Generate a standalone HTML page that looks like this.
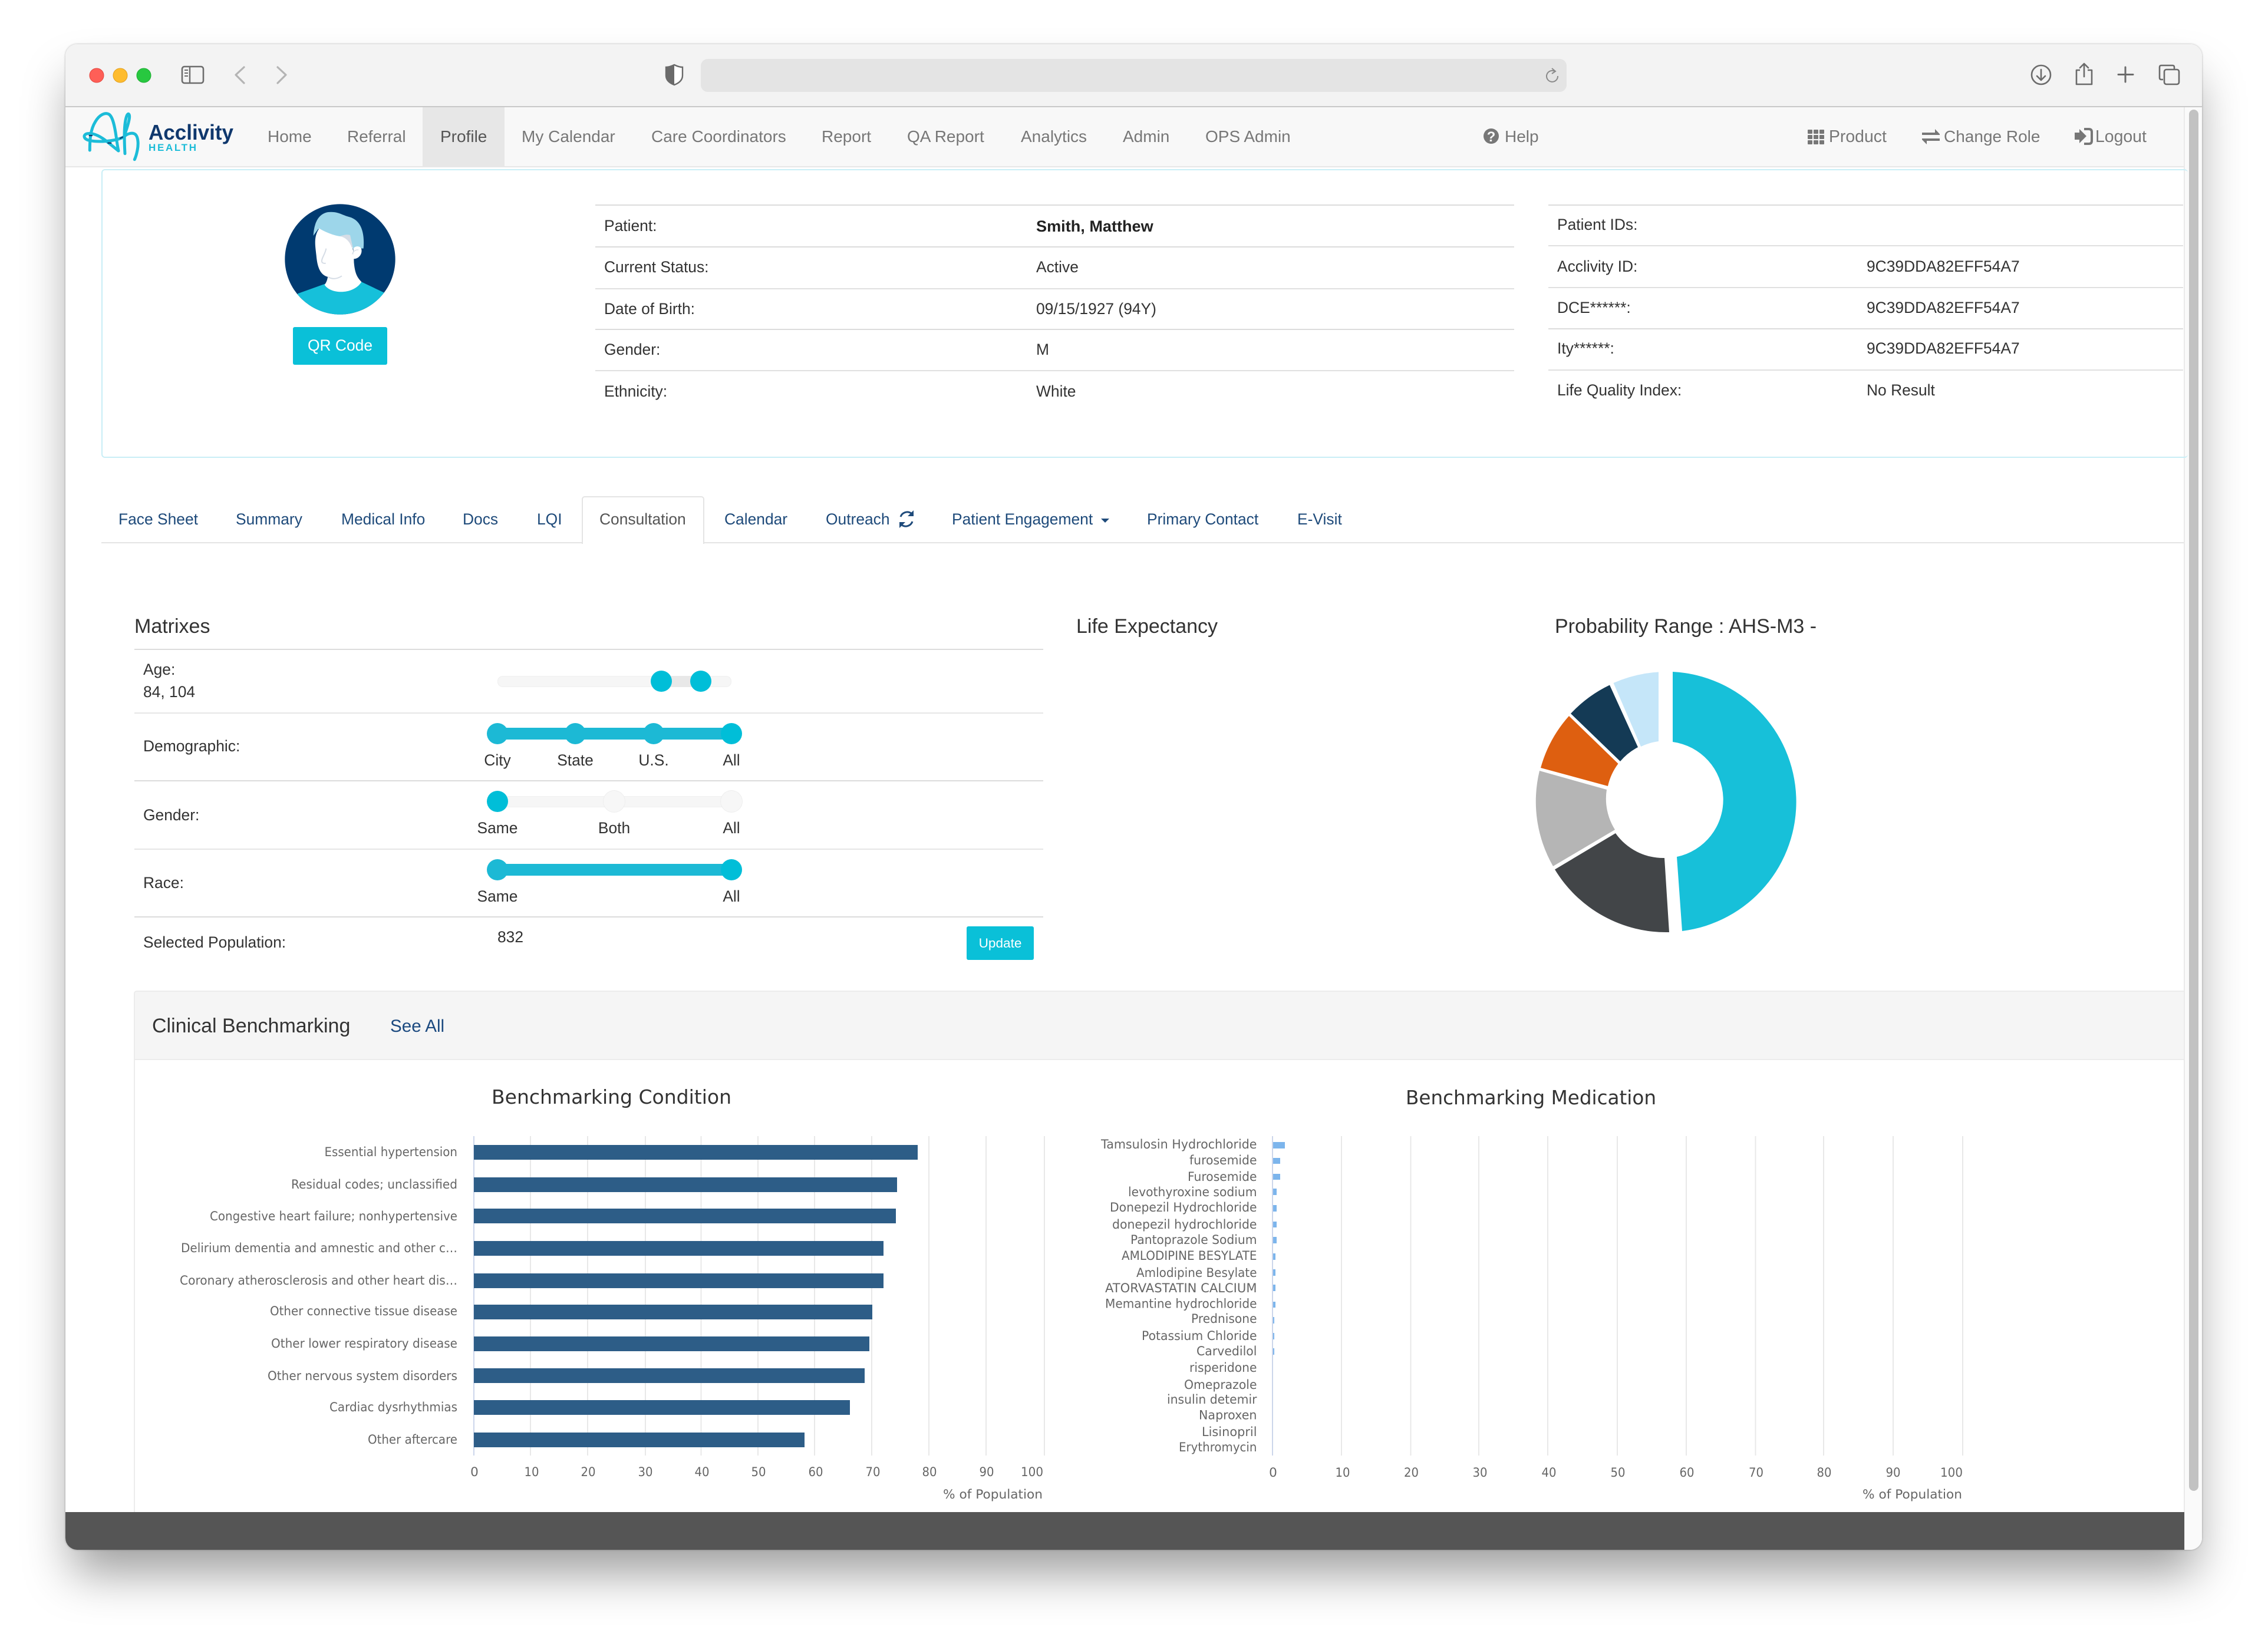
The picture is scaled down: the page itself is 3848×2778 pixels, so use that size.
<!DOCTYPE html>
<html lang="en">
<head>
<meta charset="utf-8">
<title>Acclivity Health - Profile</title>
<style>
html,body{margin:0;padding:0;width:3848px;height:2778px;background:#fff;overflow:hidden}
body{position:relative;font-family:"Liberation Sans",sans-serif;color:#333}
#shadow{position:absolute;left:111px;top:75px;width:3625px;height:2555px;border-radius:20px;box-shadow:0 50px 80px -10px rgba(0,0,0,.38),0 0 3px rgba(0,0,0,.3)}
#c{position:absolute;left:0;top:0;width:3848px;height:2778px;clip-path:inset(75px 112px 148px 111px round 20px);background:#fff}
.b{position:absolute}
.t{position:absolute;line-height:0;white-space:nowrap;font-size:26.4px;color:#333}
.n{font-size:28px;color:#777}
.tb{color:#1e4a7a}
.h{font-size:34px;color:#333}
.cl{transform:translateX(-50%)}
.ln{position:absolute;height:2px;background:#e0e0e0}
.track{position:absolute;height:19px;border-radius:9px;background:#f6f6f6;box-shadow:inset 0 0 0 1px #f0f0f0}
.fill{position:absolute;height:19px;background:#1cb9d5}
.hd{position:absolute;width:36px;height:36px;border-radius:50%;background:#00bed8;transform:translate(-50%,-50%)}
.hw{background:#f7f7f7;box-shadow:0 0 0 1px #eee}
svg{position:absolute;left:0;top:0}
</style>
</head>
<body>
<div id="shadow"></div>
<div id="c">
  <!-- title bar -->
  <div class="b" style="left:111px;top:75px;width:3625px;height:105px;background:#f3f3f3"></div>
  <div class="b" style="left:111px;top:180px;width:3625px;height:2px;background:#c8c8c8"></div>
  <div class="b" style="left:1189px;top:100px;width:1469px;height:56px;background:#e4e4e4;border-radius:12px"></div>
  <!-- nav -->
  <div class="b" style="left:111px;top:182px;width:3594px;height:100px;background:#f8f8f8"></div>
  <div class="b" style="left:111px;top:282px;width:3594px;height:2px;background:#e7e7e7"></div>
  <div class="b" style="left:717px;top:182px;width:139px;height:100px;background:#e7e7e7"></div>
  <div class="t n" style="left:454px;top:232px">Home</div>
  <div class="t n" style="left:589px;top:232px">Referral</div>
  <div class="t n" style="left:747px;top:232px;color:#555">Profile</div>
  <div class="t n" style="left:885px;top:232px">My Calendar</div>
  <div class="t n" style="left:1105px;top:232px">Care Coordinators</div>
  <div class="t n" style="left:1394px;top:232px">Report</div>
  <div class="t n" style="left:1539px;top:232px">QA Report</div>
  <div class="t n" style="left:1732px;top:232px">Analytics</div>
  <div class="t n" style="left:1905px;top:232px">Admin</div>
  <div class="t n" style="left:2045px;top:232px">OPS Admin</div>
  <div class="t n" style="left:2553px;top:232px">Help</div>
  <div class="t n" style="left:3103px;top:232px;font-size:28.4px">Product</div>
  <div class="t n" style="left:3298px;top:232px">Change Role</div>
  <div class="t n" style="left:3555px;top:232px;font-size:28.4px">Logout</div>

  <!-- scrollbar -->
  <div class="b" style="left:3705px;top:182px;width:31px;height:2450px;background:#fafafa;border-left:2px solid #eaeaea;box-sizing:border-box"></div>
  <div class="b" style="left:3714px;top:186px;width:16px;height:2344px;background:#c2c2c2;border-radius:8px"></div>

  <!-- patient panel -->
  <div class="b" style="left:172px;top:287px;width:3540px;height:490px;border:2px solid #c9eef6;border-radius:6px;box-sizing:border-box;border-right:0"></div>
  <div class="b" style="left:497px;top:555px;width:160px;height:64px;background:#0ac0d8;border-radius:3px"></div>
  <div class="t cl" style="left:577px;top:586px;color:#fff;font-size:26.4px">QR Code</div>

  <div class="ln" style="left:1010px;top:347px;width:1559px;background:#dcdcdc"></div>
  <div class="ln" style="left:1010px;top:418px;width:1559px;background:#dcdcdc"></div>
  <div class="ln" style="left:1010px;top:489px;width:1559px"></div>
  <div class="ln" style="left:1010px;top:558px;width:1559px;background:#dcdcdc"></div>
  <div class="ln" style="left:1010px;top:628px;width:1559px"></div>
  <div class="t" style="left:1025px;top:383px">Patient:</div>
  <div class="t" style="left:1758px;top:384px;font-weight:bold;color:#222;font-size:27.1px">Smith, Matthew</div>
  <div class="t" style="left:1025px;top:453px">Current Status:</div>
  <div class="t" style="left:1758px;top:453px">Active</div>
  <div class="t" style="left:1025px;top:524px">Date of Birth:</div>
  <div class="t" style="left:1758px;top:524px">09/15/1927 (94Y)</div>
  <div class="t" style="left:1025px;top:593px">Gender:</div>
  <div class="t" style="left:1758px;top:593px">M</div>
  <div class="t" style="left:1025px;top:664px">Ethnicity:</div>
  <div class="t" style="left:1758px;top:664px">White</div>

  <div class="ln" style="left:2627px;top:347px;width:1077px;background:#dcdcdc"></div>
  <div class="ln" style="left:2627px;top:416px;width:1077px"></div>
  <div class="ln" style="left:2627px;top:487px;width:1077px"></div>
  <div class="ln" style="left:2627px;top:557px;width:1077px;background:#dcdcdc"></div>
  <div class="ln" style="left:2627px;top:627px;width:1077px"></div>
  <div class="t" style="left:2642px;top:381px">Patient IDs:</div>
  <div class="t" style="left:2642px;top:452px">Acclivity ID:</div>
  <div class="t" style="left:3167px;top:452px">9C39DDA82EFF54A7</div>
  <div class="t" style="left:2642px;top:522px">DCE******:</div>
  <div class="t" style="left:3167px;top:522px">9C39DDA82EFF54A7</div>
  <div class="t" style="left:2642px;top:591px">Ity******:</div>
  <div class="t" style="left:3167px;top:591px">9C39DDA82EFF54A7</div>
  <div class="t" style="left:2642px;top:662px">Life Quality Index:</div>
  <div class="t" style="left:3167px;top:662px">No Result</div>

  <!-- tabs -->
  <div class="ln" style="left:172px;top:920px;width:3533px;background:#e4e4e4"></div>
  <div class="b" style="left:987px;top:842px;width:208px;height:81px;background:#fff;border:2px solid #e4e4e4;border-bottom:0;border-radius:5px 5px 0 0;box-sizing:border-box"></div>
  <div class="t tb" style="left:201px;top:881px">Face Sheet</div>
  <div class="t tb" style="left:400px;top:881px">Summary</div>
  <div class="t tb" style="left:579px;top:881px">Medical Info</div>
  <div class="t tb" style="left:785px;top:881px">Docs</div>
  <div class="t tb" style="left:911px;top:881px">LQI</div>
  <div class="t" style="left:1017px;top:881px;color:#555">Consultation</div>
  <div class="t tb" style="left:1229px;top:881px">Calendar</div>
  <div class="t tb" style="left:1401px;top:881px">Outreach</div>
  <div class="t tb" style="left:1615px;top:881px">Patient Engagement</div>
  <div class="t tb" style="left:1946px;top:881px">Primary Contact</div>
  <div class="t tb" style="left:2201px;top:881px">E-Visit</div>

  <!-- matrixes -->
  <div class="t h" style="left:228px;top:1063px">Matrixes</div>
  <div class="t h" style="left:1826px;top:1063px">Life Expectancy</div>
  <div class="t h" style="left:2638px;top:1063px">Probability Range : AHS-M3 -</div>
  <div class="ln" style="left:228px;top:1101px;width:1542px;background:#dcdcdc"></div>
  <div class="ln" style="left:228px;top:1209px;width:1542px;background:#e6e6e6"></div>
  <div class="ln" style="left:228px;top:1324px;width:1542px;background:#dcdcdc"></div>
  <div class="ln" style="left:228px;top:1440px;width:1542px;background:#e6e6e6"></div>
  <div class="ln" style="left:228px;top:1555px;width:1542px;background:#dcdcdc"></div>

  <div class="t" style="left:243px;top:1136px">Age:</div>
  <div class="t" style="left:243px;top:1174px">84, 104</div>
  <div class="track" style="left:844px;top:1147px;width:397px"></div>
  <div class="b" style="left:1122px;top:1147px;width:67px;height:19px;background:#e8e8e8"></div>
  <div class="hd" style="left:1122px;top:1156px"></div>
  <div class="hd" style="left:1189px;top:1156px"></div>

  <div class="t" style="left:243px;top:1266px">Demographic:</div>
  <div class="fill" style="left:844px;top:1235px;width:397px;height:20px"></div>
  <div class="hd" style="left:844px;top:1245px;background:#1cb9d5"></div>
  <div class="hd" style="left:976px;top:1245px;background:#1cb9d5"></div>
  <div class="hd" style="left:1109px;top:1245px;background:#1cb9d5"></div>
  <div class="hd" style="left:1241px;top:1245px"></div>
  <div class="t cl" style="left:844px;top:1290px">City</div>
  <div class="t cl" style="left:976px;top:1290px">State</div>
  <div class="t cl" style="left:1109px;top:1290px">U.S.</div>
  <div class="t cl" style="left:1241px;top:1290px">All</div>

  <div class="t" style="left:243px;top:1383px">Gender:</div>
  <div class="track" style="left:844px;top:1351px;width:397px"></div>
  <div class="hd hw" style="left:1042px;top:1360px"></div>
  <div class="hd hw" style="left:1241px;top:1360px"></div>
  <div class="hd" style="left:844px;top:1360px"></div>
  <div class="t cl" style="left:844px;top:1405px">Same</div>
  <div class="t cl" style="left:1042px;top:1405px">Both</div>
  <div class="t cl" style="left:1241px;top:1405px">All</div>

  <div class="t" style="left:243px;top:1498px">Race:</div>
  <div class="fill" style="left:844px;top:1466px;width:397px;height:20px"></div>
  <div class="hd" style="left:844px;top:1476px;background:#1cb9d5"></div>
  <div class="hd" style="left:1241px;top:1476px"></div>
  <div class="t cl" style="left:844px;top:1521px">Same</div>
  <div class="t cl" style="left:1241px;top:1521px">All</div>

  <div class="t" style="left:243px;top:1599px">Selected Population:</div>
  <div class="t" style="left:844px;top:1590px">832</div>
  <div class="b" style="left:1640px;top:1572px;width:114px;height:57px;background:#0ac0d8;border-radius:3px"></div>
  <div class="t cl" style="left:1697px;top:1601px;color:#fff;font-size:22.6px">Update</div>

  <!-- clinical benchmarking -->
  <div class="b" style="left:227px;top:1681px;width:3478px;height:118px;background:#f5f5f5;border:2px solid #ececec;border-right:0;border-radius:5px 0 0 0;box-sizing:border-box"></div>
  <div class="b" style="left:227px;top:1799px;width:2px;height:770px;background:#ececec"></div>
  <div class="t h" style="left:258px;top:1741px">Clinical Benchmarking</div>
  <div class="t" style="left:662px;top:1742px;font-size:29.6px;color:#1c4a80">See All</div>

  <!-- footer -->
  <div class="b" style="left:111px;top:2566px;width:3595px;height:64px;background:#555"></div>

  <svg width="3848" height="2778" viewBox="0 0 3848 2778" xmlns="http://www.w3.org/2000/svg">
    <!-- traffic lights -->
    <circle cx="164" cy="128" r="12" fill="#fe5f57" stroke="#e5463f" stroke-width="1"/>
    <circle cx="204" cy="128" r="12" fill="#febc2e" stroke="#e2a020" stroke-width="1"/>
    <circle cx="244" cy="128" r="12" fill="#28c840" stroke="#1fae34" stroke-width="1"/>
    <!-- sidebar icon -->
    <rect x="309" y="113" width="36" height="28" rx="4" fill="none" stroke="#6d6d6d" stroke-width="2.6"/>
    <path d="M322 113V141" stroke="#6d6d6d" stroke-width="2.4"/>
    <path d="M313 119h6M313 124h6M313 129h6" stroke="#6d6d6d" stroke-width="2"/>
    <!-- chevrons -->
    <path d="M414 114L400 127L414 141" fill="none" stroke="#b4b4b4" stroke-width="3.2" stroke-linecap="round" stroke-linejoin="round"/>
    <path d="M471 114L485 127L471 141" fill="none" stroke="#b4b4b4" stroke-width="3.2" stroke-linecap="round" stroke-linejoin="round"/>
    <!-- shield -->
    <path d="M1144 110C1150 113 1154 114 1158 114V128C1158 136 1152 141 1144 144C1136 141 1130 136 1130 128V114C1134 114 1138 113 1144 110Z" fill="#fff" stroke="#6a6a6a" stroke-width="2.4"/>
    <path d="M1144 110C1138 113 1134 114 1130 114V128C1130 136 1136 141 1144 144Z" fill="#6a6a6a"/>
    <!-- reload -->
    <path d="M2638 121A9.5 9.5 0 1 0 2643 129" fill="none" stroke="#8a8a8a" stroke-width="2"/>
    <path d="M2633 116L2639 121L2633 125" fill="none" stroke="#8a8a8a" stroke-width="2"/>
    <!-- right toolbar icons -->
    <circle cx="3463" cy="127" r="16" fill="none" stroke="#6b6b6b" stroke-width="2.6"/>
    <path d="M3463 118V136M3456 129L3463 136L3470 129" fill="none" stroke="#6b6b6b" stroke-width="2.6" stroke-linecap="round" stroke-linejoin="round"/>
    <path d="M3529 119H3523V143H3549V119H3542" fill="none" stroke="#6b6b6b" stroke-width="2.6" stroke-linejoin="round"/>
    <path d="M3536 110V130M3529 115L3536 108L3543 115" fill="none" stroke="#6b6b6b" stroke-width="2.6" stroke-linecap="round" stroke-linejoin="round"/>
    <path d="M3606 114V139M3594 126.500H3619" stroke="#6b6b6b" stroke-width="3" stroke-linecap="round"/>
    <path d="M3670 135H3667Q3664 135 3664 132V114Q3664 111 3667 111H3686Q3689 111 3689 114V118" fill="none" stroke="#6b6b6b" stroke-width="2.6"/>
    <rect x="3672" y="118" width="25" height="25" rx="3.500" fill="none" stroke="#6b6b6b" stroke-width="2.6"/>

    <!-- logo -->
    <g transform="translate(120 70) scale(.33333)" fill="none" stroke="#1cbcd8" stroke-width="15" stroke-linecap="round" stroke-linejoin="round">
      <path d="M97 555C97 500 100 450 125 410C145 375 175 360 195 372C215 385 225 440 232 490C236 520 240 545 243 558L190 515C160 490 120 465 85 470C60 475 65 500 95 505C140 515 220 510 265 490"/>
      <path d="M276 572C272 500 270 420 285 380C292 362 302 370 298 395C292 430 280 460 270 488C285 470 315 462 330 475C345 490 345 530 338 560C333 585 328 595 325 602"/>
      <path d="M95 480H108M190 518H205M252 494L264 488" stroke="#123a6e" stroke-width="7"/>
    </g>
    <text x="252" y="237" font-family="Liberation Sans" font-size="36" font-weight="bold" fill="#10386d" textLength="144" lengthAdjust="spacingAndGlyphs">Acclivity</text>
    <text x="252" y="256" font-family="Liberation Sans" font-size="17" font-weight="bold" fill="#1cbcd8" textLength="81" lengthAdjust="spacing">HEALTH</text>

    <!-- avatar -->
    <defs><clipPath id="av"><circle cx="411" cy="360" r="281"/></clipPath></defs>
    <g transform="translate(440 320) scale(.33333)">
      <g clip-path="url(#av)">
        <rect x="120" y="70" width="580" height="580" fill="#003a70"/>
        <path d="M195 535L335 485L520 475L635 530L635 660H195Z" fill="#16c0da"/>
        <path d="M350 440C347 462 342 478 332 490C365 540 480 540 520 475C495 450 483 425 480 350Z" fill="#fff"/>
        <path d="M275 240C278 180 298 128 350 120C400 115 420 135 460 145C512 160 538 215 530 305L470 305L300 205Z" fill="#9dd6ea"/>
        <path d="M305 203C340 225 385 240 410 243L462 238L478 320C482 350 482 390 478 420C430 455 380 460 350 450C310 440 295 400 290 340C285 290 275 245 305 203Z" fill="#fff"/>
        <path d="M410 243C430 235 455 232 462 238L476 300L470 300C462 275 445 250 410 243Z" fill="#d6dde6"/>
        <path d="M478 305C490 290 515 290 520 310C524 335 505 358 480 358Z" fill="#fff"/>
        <path d="M340 305C335 335 315 355 318 372C320 380 330 382 338 380" fill="none" stroke="#d6dde6" stroke-width="6"/>
        <path d="M350 450C375 465 400 458 420 445" fill="none" stroke="#d6dde6" stroke-width="6"/>
        <path d="M505 312C490 310 476 320 473 335" fill="none" stroke="#d6dde6" stroke-width="4"/>
      </g>
    </g>

    <!-- nav icons -->
    <circle cx="2530" cy="231" r="13" fill="#777"/>
    <text x="2530" y="240" text-anchor="middle" font-family="Liberation Sans" font-size="24" font-weight="bold" fill="#f8f8f8">?</text>
    <g fill="#777">
      <rect x="3067" y="220" width="8" height="7" rx="1"/><rect x="3077" y="220" width="8" height="7" rx="1"/><rect x="3087" y="220" width="8" height="7" rx="1"/>
      <rect x="3067" y="229" width="8" height="7" rx="1"/><rect x="3077" y="229" width="8" height="7" rx="1"/><rect x="3087" y="229" width="8" height="7" rx="1"/>
      <rect x="3067" y="238" width="8" height="7" rx="1"/><rect x="3077" y="238" width="8" height="7" rx="1"/><rect x="3087" y="238" width="8" height="7" rx="1"/>
      <path d="M3261 225H3283V219L3291 227.500V229H3261ZM3261 235H3291V239H3269V245L3261 237Z"/>
      <path d="M3520 225H3528V219L3540 231L3528 243V237H3520Z"/>
    </g>
    <path d="M3536 219H3544Q3549 219 3549 224V239Q3549 244 3544 244H3536" fill="none" stroke="#777" stroke-width="4"/>
    <!-- outreach refresh -->
    <path d="M1546 871A12 12 0 0 0 1528 877M1530 891A12 12 0 0 0 1548 885" fill="none" stroke="#1e4a7a" stroke-width="3"/>
    <path d="M1550 866V876H1540ZM1526 896V886H1536Z" fill="#1e4a7a"/>
    <!-- caret -->
    <path d="M1868 880H1882L1875 887Z" fill="#1e4a7a"/>

    <!-- donut -->
    <path d="M2838 1140A221 221 0 0 1 2854 1580L2845 1454A99 99 0 0 0 2838 1259Z" fill="#17c0d9"/>
    <path d="M2832 1582A221 221 0 0 1 2638 1475.500L2741 1414A99 99 0 0 0 2824 1456Z" fill="#424548"/>
    <path d="M2635 1470A221 221 0 0 1 2612 1308L2726 1340A99 99 0 0 0 2740 1408Z" fill="#b5b5b5"/>
    <path d="M2614 1303A221 221 0 0 1 2662 1215L2745.500 1296A99 99 0 0 0 2728 1334Z" fill="#de5f10"/>
    <path d="M2665 1211A221 221 0 0 1 2731 1162.500L2779 1268A99 99 0 0 0 2749 1292Z" fill="#143a55"/>
    <path d="M2737.500 1159A221 221 0 0 1 2814 1140.500V1258A99 99 0 0 0 2784 1267Z" fill="#c5e6f9"/>

    <!-- chart 1 -->
    <g stroke="#e8e8e8" stroke-width="2">
      <path d="M900 1928V2470M997 1928V2470M1095 1928V2470M1189.500 1928V2470M1286 1928V2470M1382 1928V2470M1479 1928V2470M1576 1928V2470M1673 1928V2470M1772 1928V2470"/>
    </g>
    <path d="M804 1928V2470" stroke="#ccd6eb" stroke-width="2"/>
    <g fill="#2d5d87">
      <rect x="804" y="1943" width="753" height="25"/>
      <rect x="804" y="1998" width="718" height="25"/>
      <rect x="804" y="2051" width="716" height="25"/>
      <rect x="804" y="2106" width="695" height="25"/>
      <rect x="804" y="2161" width="695" height="25"/>
      <rect x="804" y="2214" width="676" height="25"/>
      <rect x="804" y="2268" width="671" height="25"/>
      <rect x="804" y="2322" width="663" height="25"/>
      <rect x="804" y="2376" width="638" height="25"/>
      <rect x="804" y="2431" width="561" height="25"/>
    </g>
    <text x="834" y="1873" font-family="DejaVu Sans" font-size="33" fill="#333" textLength="407" lengthAdjust="spacingAndGlyphs">Benchmarking Condition</text>
    <g font-family="DejaVu Sans" font-size="21.5" fill="#666">
      <text x="550.500" y="1962" textLength="225.500" lengthAdjust="spacingAndGlyphs">Essential hypertension</text>
      <text x="494" y="2017" textLength="282" lengthAdjust="spacingAndGlyphs">Residual codes; unclassified</text>
      <text x="356" y="2071" textLength="420" lengthAdjust="spacingAndGlyphs">Congestive heart failure; nonhypertensive</text>
      <text x="307" y="2125" textLength="469" lengthAdjust="spacingAndGlyphs">Delirium dementia and amnestic and other c…</text>
      <text x="305" y="2180" textLength="471" lengthAdjust="spacingAndGlyphs">Coronary atherosclerosis and other heart dis…</text>
      <text x="458" y="2232" textLength="318" lengthAdjust="spacingAndGlyphs">Other connective tissue disease</text>
      <text x="460" y="2287" textLength="316" lengthAdjust="spacingAndGlyphs">Other lower respiratory disease</text>
      <text x="454" y="2342" textLength="322" lengthAdjust="spacingAndGlyphs">Other nervous system disorders</text>
      <text x="559" y="2395" textLength="217" lengthAdjust="spacingAndGlyphs">Cardiac dysrhythmias</text>
      <text x="624" y="2450" textLength="152" lengthAdjust="spacingAndGlyphs">Other aftercare</text>
      <g text-anchor="middle">
        <text x="805" y="2505">0</text><text x="902" y="2505" textLength="25" lengthAdjust="spacingAndGlyphs">10</text><text x="998" y="2505" textLength="25" lengthAdjust="spacingAndGlyphs">20</text><text x="1095" y="2505" textLength="25" lengthAdjust="spacingAndGlyphs">30</text><text x="1191" y="2505" textLength="25" lengthAdjust="spacingAndGlyphs">40</text><text x="1287" y="2505" textLength="25" lengthAdjust="spacingAndGlyphs">50</text><text x="1384" y="2505" textLength="25" lengthAdjust="spacingAndGlyphs">60</text><text x="1481" y="2505" textLength="25" lengthAdjust="spacingAndGlyphs">70</text><text x="1577" y="2505" textLength="25" lengthAdjust="spacingAndGlyphs">80</text><text x="1674" y="2505" textLength="25" lengthAdjust="spacingAndGlyphs">90</text><text x="1751" y="2505" textLength="38" lengthAdjust="spacingAndGlyphs">100</text>
      </g>
      <text x="1600" y="2543" textLength="169" lengthAdjust="spacingAndGlyphs">% of Population</text>
    </g>

    <!-- chart 2 -->
    <g stroke="#e8e8e8" stroke-width="2">
      <path d="M2276 1928V2470M2393.500 1928V2470M2509 1928V2470M2626 1928V2470M2744 1928V2470M2861 1928V2470M2978.500 1928V2470M3094 1928V2470M3212 1928V2470M3330 1928V2470"/>
    </g>
    <path d="M2159 1928V2470" stroke="#ccd6eb" stroke-width="2"/>
    <g fill="#7cb5ec">
      <rect x="2160" y="1938" width="20" height="11"/>
      <rect x="2160" y="1965" width="12" height="10"/>
      <rect x="2160" y="1992" width="12" height="10"/>
      <rect x="2160" y="2017" width="6" height="11"/>
      <rect x="2160" y="2045" width="6" height="11"/>
      <rect x="2160" y="2073" width="6" height="10"/>
      <rect x="2160" y="2099" width="6" height="11"/>
      <rect x="2160" y="2127" width="4" height="11"/>
      <rect x="2160" y="2154" width="4" height="11"/>
      <rect x="2160" y="2180" width="4" height="11"/>
      <rect x="2160" y="2209" width="4" height="10"/>
      <rect x="2160" y="2235" width="2" height="11"/>
      <rect x="2160" y="2262" width="2" height="11"/>
      <rect x="2160" y="2288" width="2" height="11"/>
    </g>
    <text x="2385" y="1874" font-family="DejaVu Sans" font-size="33" fill="#333" textLength="425" lengthAdjust="spacingAndGlyphs">Benchmarking Medication</text>
    <g font-family="DejaVu Sans" font-size="21.5" fill="#666">
      <text x="1868" y="1949" textLength="264.500" lengthAdjust="spacingAndGlyphs">Tamsulosin Hydrochloride</text>
      <text x="2018" y="1976" textLength="114.500" lengthAdjust="spacingAndGlyphs">furosemide</text>
      <text x="2015" y="2004" textLength="117.500" lengthAdjust="spacingAndGlyphs">Furosemide</text>
      <text x="1914" y="2030" textLength="218.500" lengthAdjust="spacingAndGlyphs">levothyroxine sodium</text>
      <text x="1883" y="2056" textLength="249.500" lengthAdjust="spacingAndGlyphs">Donepezil Hydrochloride</text>
      <text x="1887" y="2085" textLength="245.500" lengthAdjust="spacingAndGlyphs">donepezil hydrochloride</text>
      <text x="1918" y="2111" textLength="214.500" lengthAdjust="spacingAndGlyphs">Pantoprazole Sodium</text>
      <text x="1903" y="2138" textLength="229.500" lengthAdjust="spacingAndGlyphs">AMLODIPINE BESYLATE</text>
      <text x="1928" y="2167" textLength="204.500" lengthAdjust="spacingAndGlyphs">Amlodipine Besylate</text>
      <text x="1875" y="2193" textLength="257.500" lengthAdjust="spacingAndGlyphs">ATORVASTATIN CALCIUM</text>
      <text x="1875" y="2219.500" textLength="257.500" lengthAdjust="spacingAndGlyphs">Memantine hydrochloride</text>
      <text x="2021" y="2245" textLength="111.500" lengthAdjust="spacingAndGlyphs">Prednisone</text>
      <text x="1937" y="2274" textLength="195.500" lengthAdjust="spacingAndGlyphs">Potassium Chloride</text>
      <text x="2030" y="2300" textLength="102.500" lengthAdjust="spacingAndGlyphs">Carvedilol</text>
      <text x="2018" y="2328" textLength="114.500" lengthAdjust="spacingAndGlyphs">risperidone</text>
      <text x="2009" y="2357" textLength="123.500" lengthAdjust="spacingAndGlyphs">Omeprazole</text>
      <text x="1980" y="2382" textLength="152.500" lengthAdjust="spacingAndGlyphs">insulin detemir</text>
      <text x="2034" y="2408.500" textLength="98.500" lengthAdjust="spacingAndGlyphs">Naproxen</text>
      <text x="2039" y="2437" textLength="93.500" lengthAdjust="spacingAndGlyphs">Lisinopril</text>
      <text x="2000" y="2463" textLength="132.500" lengthAdjust="spacingAndGlyphs">Erythromycin</text>
      <g text-anchor="middle">
        <text x="2160" y="2506">0</text><text x="2278" y="2506" textLength="25" lengthAdjust="spacingAndGlyphs">10</text><text x="2394.500" y="2506" textLength="25" lengthAdjust="spacingAndGlyphs">20</text><text x="2511" y="2506" textLength="25" lengthAdjust="spacingAndGlyphs">30</text><text x="2628" y="2506" textLength="25" lengthAdjust="spacingAndGlyphs">40</text><text x="2745" y="2506" textLength="25" lengthAdjust="spacingAndGlyphs">50</text><text x="2862" y="2506" textLength="25" lengthAdjust="spacingAndGlyphs">60</text><text x="2979.500" y="2506" textLength="25" lengthAdjust="spacingAndGlyphs">70</text><text x="3095" y="2506" textLength="25" lengthAdjust="spacingAndGlyphs">80</text><text x="3212" y="2506" textLength="25" lengthAdjust="spacingAndGlyphs">90</text><text x="3311" y="2506" textLength="38" lengthAdjust="spacingAndGlyphs">100</text>
      </g>
      <text x="3160" y="2543" textLength="169" lengthAdjust="spacingAndGlyphs">% of Population</text>
    </g>
  </svg>
</div>
</body>
</html>
